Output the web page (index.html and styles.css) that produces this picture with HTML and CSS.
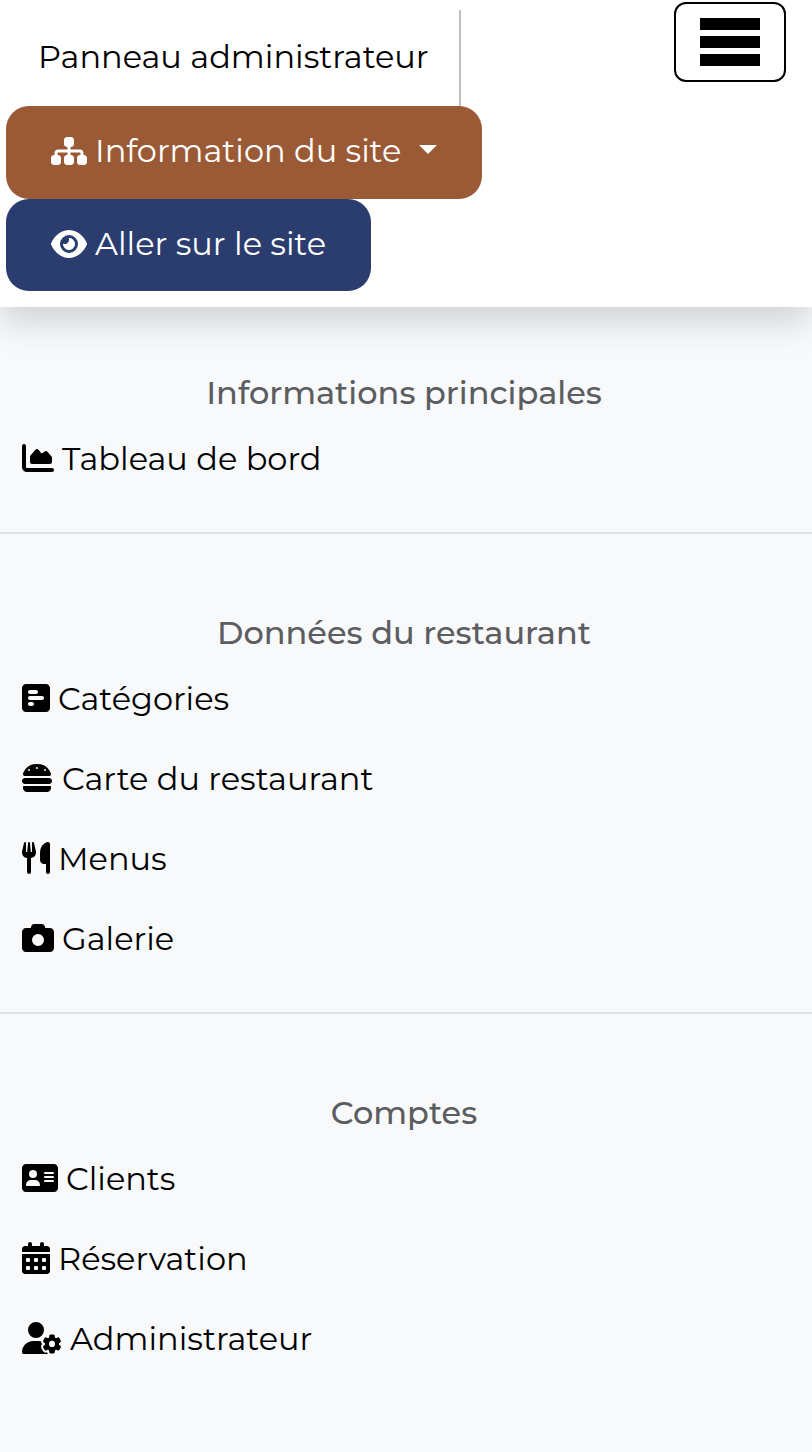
FILE: index.html
```html
<!DOCTYPE html>
<html lang="fr">
<head>
<meta charset="utf-8">
<title>Panneau administrateur</title>
<link rel="stylesheet" href="styles.css">
</head>
<body>
<header class="topbar">
  <div class="brand-row">
    <div class="brand">Panneau administrateur</div>
    <button class="toggler" aria-label="Menu"><span></span><span></span><span></span></button>
  </div>
  <a class="btn btn-info">
    <svg class="icon w36" viewBox="0 0 576 512"><path d="M208 80c0-26.500 21.500-48 48-48l64 0c26.500 0 48 21.500 48 48l0 64c0 26.500-21.500 48-48 48l-8 0 0 40 152 0c30.900 0 56 25.100 56 56l0 32 8 0c26.500 0 48 21.500 48 48l0 64c0 26.500-21.500 48-48 48l-64 0c-26.500 0-48-21.500-48-48l0-64c0-26.500 21.500-48 48-48l8 0 0-32c0-4.400-3.600-8-8-8l-152 0 0 40 8 0c26.500 0 48 21.500 48 48l0 64c0 26.500-21.500 48-48 48l-64 0c-26.500 0-48-21.500-48-48l0-64c0-26.500 21.500-48 48-48l8 0 0-40-152 0c-4.400 0-8 3.600-8 8l0 32 8 0c26.500 0 48 21.500 48 48l0 64c0 26.500-21.500 48-48 48l-64 0c-26.500 0-48-21.500-48-48l0-64c0-26.500 21.500-48 48-48l8 0 0-32c0-30.900 25.100-56 56-56l152 0 0-40-8 0c-26.500 0-48-21.500-48-48l0-64z"/></svg>
    <span>Information du site</span><i class="caret"></i>
  </a>
  <a class="btn btn-site">
    <svg class="icon w36" viewBox="0 0 576 512"><path d="M288 32c-80.800 0-145.500 36.800-192.600 80.600C48.600 156 17.300 208 2.500 243.700c-3.300 7.900-3.300 16.700 0 24.600C17.300 304 48.600 356 95.400 399.400C142.500 443.200 207.200 480 288 480s145.500-36.800 192.600-80.600c46.800-43.500 78.100-95.400 93-131.100c3.300-7.900 3.300-16.700 0-24.600c-14.900-35.700-46.200-87.700-93-131.100C433.500 68.800 368.800 32 288 32zM144 256a144 144 0 1 1 288 0 144 144 0 1 1 -288 0zm144-64c0 35.300-28.700 64-64 64c-7.100 0-13.900-1.200-20.300-3.300c-5.500-1.800-11.900 1.600-11.700 7.400c.3 6.900 1.300 13.800 3.200 20.700c13.700 51.200 66.400 81.600 117.600 67.900s81.600-66.400 67.900-117.600c-11.100-41.500-47.800-69.400-88.600-71.100c-5.800-.2-9.200 6.100-7.400 11.700c2.100 6.400 3.300 13.200 3.300 20.300z"/></svg>
    <span>Aller sur le site</span>
  </a>
</header>
<nav>
  <section class="group">
    <h2 class="title">Informations principales</h2>
    <a class="item"><svg class="icon w32" viewBox="0 0 512 512"><path d="M64 64c0-17.700-14.300-32-32-32S0 46.300 0 64V400c0 44.200 35.800 80 80 80H480c17.700 0 32-14.300 32-32s-14.300-32-32-32H80c-8.800 0-16-7.200-16-16V64zm96 288H448c17.700 0 32-14.300 32-32V251.800c0-7.600-2.700-15-7.700-20.800l-65.800-76.800c-12.100-14.200-33.700-15-46.900-1.800l-21 21c-10 10-26.400 9.200-35.400-1.600l-39.200-47c-12.600-15.100-35.700-15.400-48.700-.6L135.900 215c-5.100 5.800-7.900 13.300-7.900 21.100v84c0 17.700 14.300 32 32 32z"/></svg><span>Tableau de bord</span></a>
  </section>
  <section class="group">
    <h2 class="title">Données du restaurant</h2>
    <a class="item"><svg class="icon w28" viewBox="0 0 448 512"><path d="M448 96c0-35.300-28.700-64-64-64L64 32C28.700 32 0 60.700 0 96L0 416c0 35.300 28.700 64 64 64l320 0c35.300 0 64-28.700 64-64l0-320zM256 160c0 17.700-14.300 32-32 32l-96 0c-17.700 0-32-14.300-32-32s14.300-32 32-32l96 0c17.700 0 32 14.300 32 32zm64 64c17.700 0 32 14.300 32 32s-14.300 32-32 32l-192 0c-17.700 0-32-14.300-32-32s14.300-32 32-32l192 0zM192 352c0 17.700-14.300 32-32 32l-32 0c-17.700 0-32-14.300-32-32s14.300-32 32-32l32 0c17.700 0 32 14.300 32 32z"/></svg><span>Catégories</span></a>
    <a class="item"><svg class="icon w32" viewBox="16 0 512 512"><path d="M61.100 224C45 224 32 211 32 194.900c0-1.900 .2-3.700 .6-5.600C37.900 168.300 78.800 32 256 32s218.100 136.300 223.400 157.300c.5 1.900 .6 3.700 .6 5.600c0 16.100-13 29.100-29.100 29.100H61.100zM144 128a16 16 0 1 0 -32 0 16 16 0 1 0 32 0zm240 16a16 16 0 1 0 0-32 16 16 0 1 0 0 32zM272 96a16 16 0 1 0 -32 0 16 16 0 1 0 32 0zM16 304c0-26.500 21.500-48 48-48H448c26.500 0 48 21.500 48 48s-21.500 48-48 48H64c-26.500 0-48-21.500-48-48zm16 96c0-8.800 7.200-16 16-16H464c8.800 0 16 7.200 16 16v16c0 35.300-28.700 64-64 64H96c-35.300 0-64-28.700-64-64V400z"/></svg><span>Carte du restaurant</span></a>
    <a class="item"><svg class="icon w28" viewBox="0 0 448 512"><path d="M416 0C400 0 288 32 288 176V288c0 35.300 28.700 64 64 64h32V480c0 17.700 14.300 32 32 32s32-14.300 32-32V352 240 32c0-17.700-14.300-32-32-32zM64 16C64 7.800 57.900 1 49.700 .1S34.200 4.600 32.400 12.500L2.100 148.800C.7 155.100 0 161.500 0 167.900c0 45.900 35.100 83.600 80 87.700V480c0 17.700 14.300 32 32 32s32-14.300 32-32V255.600c44.900-4.100 80-41.800 80-87.700c0-6.400-.7-12.800-2.100-19.100L191.600 12.500c-1.800-8-9.300-13.300-17.400-12.400S160 7.800 160 16V150.200c0 5.400-4.400 9.800-9.800 9.800c-5.100 0-9.300-3.900-9.800-9L127.900 14.600C127.200 6.300 120.300 0 112 0s-15.200 6.300-15.900 14.600L83.700 151c-.5 5.100-4.700 9-9.800 9c-5.400 0-9.800-4.400-9.800-9.800V16z"/></svg><span>Menus</span></a>
    <a class="item"><svg class="icon w32" viewBox="0 0 512 512"><path d="M149.100 64.800L138.700 96H64C28.700 96 0 124.700 0 160V416c0 35.300 28.700 64 64 64H448c35.300 0 64-28.700 64-64V160c0-35.300-28.700-64-64-64H373.300L362.900 64.800C356.400 45.200 338.100 32 317.400 32H194.600c-20.700 0-39 13.200-45.500 32.800zM256 192a96 96 0 1 1 0 192 96 96 0 1 1 0-192z"/></svg><span>Galerie</span></a>
  </section>
  <section class="group">
    <h2 class="title">Comptes</h2>
    <a class="item"><svg class="icon w36" viewBox="0 0 576 512"><path fill-rule="evenodd" d="M64 32C28.700 32 0 60.700 0 96V416c0 35.300 28.700 64 64 64H512c35.300 0 64-28.700 64-64V96c0-35.300-28.700-64-64-64H64zm80 256h64c44.200 0 80 35.800 80 80c0 8.800-7.200 16-16 16H80c-8.800 0-16-7.200-16-16c0-44.200 35.800-80 80-80zm-32-96a64 64 0 1 1 128 0 64 64 0 1 1 -128 0zm256-32H496a16 16 0 0 1 0 32H368a16 16 0 0 1 0-32zm0 64H496a16 16 0 0 1 0 32H368a16 16 0 0 1 0-32zm0 64H496a16 16 0 0 1 0 32H368a16 16 0 0 1 0-32z"/></svg><span>Clients</span></a>
    <a class="item"><svg class="icon w28" viewBox="0 0 448 512"><path fill-rule="evenodd" d="M128 0c17.700 0 32 14.300 32 32V64H288V32c0-17.700 14.300-32 32-32s32 14.300 32 32V64h48c26.500 0 48 21.500 48 48v48H0V112C0 85.500 21.500 64 48 64H96V32c0-17.700 14.300-32 32-32zM0 192H448V464c0 26.500-21.500 48-48 48H48c-26.500 0-48-21.500-48-48zM80 256a16 16 0 0 0-16 16v32a16 16 0 0 0 16 16h32a16 16 0 0 0 16-16v-32a16 16 0 0 0-16-16zM208 256a16 16 0 0 0-16 16v32a16 16 0 0 0 16 16h32a16 16 0 0 0 16-16v-32a16 16 0 0 0-16-16zM336 256a16 16 0 0 0-16 16v32a16 16 0 0 0 16 16h32a16 16 0 0 0 16-16v-32a16 16 0 0 0-16-16zM80 384a16 16 0 0 0-16 16v32a16 16 0 0 0 16 16h32a16 16 0 0 0 16-16v-32a16 16 0 0 0-16-16zM208 384a16 16 0 0 0-16 16v32a16 16 0 0 0 16 16h32a16 16 0 0 0 16-16v-32a16 16 0 0 0-16-16zM336 384a16 16 0 0 0-16 16v32a16 16 0 0 0 16 16h32a16 16 0 0 0 16-16v-32a16 16 0 0 0-16-16z"/></svg><span>Réservation</span></a>
    <a class="item"><svg class="icon w40" viewBox="0 0 640 512"><path d="M224 0a128 128 0 1 1 0 256A128 128 0 1 1 224 0zM178.300 304h91.400c11.800 0 23.400 1.200 34.500 3.300c-2.100 18.500 7.400 35.600 21.800 44.800c-16.600 10.600-26.700 31.600-20 53.300c4 12.900 9.400 25.500 16.400 37.600s15.200 23.100 24.400 33c15.700 16.900 39.600 18.400 57.200 8.700v.9c0 9.200 2.700 18.500 7.900 26.300H29.700C13.300 512 0 498.700 0 482.300C0 383.800 79.800 304 178.300 304zM436 218.200c0-7 4.500-13.300 11.300-14.800c10.500-2.400 21.500-3.700 32.700-3.700s22.200 1.300 32.700 3.700c6.800 1.500 11.300 7.800 11.300 14.800v17.700c0 7.800 4.800 14.800 11.600 18.700c6.800 3.900 15.100 4.500 21.800 .6l13.800-7.900c6.100-3.500 13.700-2.700 18.500 2.400c7.600 8.100 14.300 17.200 20.100 27.200s10.300 20.400 13.500 31c2.100 6.700-1.100 13.700-7.200 17.200l-14.400 8.300c-6.500 3.700-10 10.900-10 18.400s3.500 14.700 10 18.400l14.400 8.300c6.100 3.500 9.200 10.500 7.200 17.200c-3.300 10.600-7.800 21-13.500 31s-12.500 19.100-20.100 27.200c-4.800 5.100-12.500 5.900-18.500 2.400l-13.800-7.900c-6.700-3.900-15.100-3.300-21.800 .6c-6.800 3.900-11.600 10.900-11.600 18.700v17.700c0 7-4.500 13.300-11.300 14.800c-10.500 2.400-21.500 3.700-32.700 3.700s-22.200-1.300-32.700-3.700c-6.800-1.500-11.300-7.800-11.300-14.800v-17.400c0-7.900-4.900-14.900-11.700-18.900c-6.800-3.900-15.200-4.500-22-.6l-13.500 7.800c-6.100 3.500-13.700 2.700-18.500-2.400c-7.600-8.100-14.300-17.200-20.100-27.200s-10.300-20.400-13.500-31c-2.100-6.700 1.100-13.700 7.200-17.200l14-8.100c6.500-3.800 10.100-11.100 10.100-18.600s-3.500-14.800-10.100-18.600l-14-8.100c-6.100-3.500-9.200-10.500-7.200-17.200c3.300-10.600 7.700-21 13.500-31s12.500-19.100 20.100-27.200c4.800-5.100 12.400-5.900 18.500-2.400l13.600 7.800c6.800 3.900 15.200 3.300 22-.6c6.900-3.900 11.700-11 11.700-18.900V218.200zm92.100 133.500a48.100 48.100 0 1 0 -96.100 0 48.100 48.100 0 1 0 96.100 0z"/></svg><span>Administrateur</span></a>
  </section>
</nav>
</body>
</html>
```
FILE: styles.css
```css
* { box-sizing: border-box; }
body {
  margin: 0;
  min-height: 1452px;
  background: #f8f9fb;
  color: #000;
  font: 400 32px/48px Montserrat, Inter, sans-serif;
}
.topbar {
  position: relative;
  height: 307px;
  padding: 2px 26px 0 6px;
  display: flex;
  flex-direction: column;
  align-items: flex-start;
  background: #fff;
  box-shadow: 0 16px 32px rgba(0, 0, 0, .15);
}
.brand-row {
  width: 100%;
  height: 104px;
  display: flex;
  justify-content: space-between;
  align-items: flex-start;
}
.brand {
  width: 455px;
  height: 96px;
  margin-top: 8px;
  padding: 23px 0 0 32px;
  border-right: 2px solid #bfbfbf;
  white-space: nowrap;
}
.toggler {
  width: 112px;
  height: 80px;
  padding: 0;
  display: flex;
  flex-direction: column;
  align-items: center;
  justify-content: center;
  gap: 6px;
  border: 2px solid #000;
  border-radius: 12px;
  background: #fff;
}
.toggler span { width: 60px; height: 12px; background: #000; }
.btn {
  height: 92.5px;
  padding: 0 45px 2px;
  display: flex;
  align-items: center;
  gap: 8px;
  border-radius: 23px;
  color: #fff;
  white-space: nowrap;
}
.btn-info { width: 476px; background: #9b5a36; }
.btn-site { width: 365px; background: #2a3d6e; }
.caret {
  margin: -4px 0 0 auto;
  border: 9px solid transparent;
  border-top-color: #fff;
  border-bottom: 0;
}
.icon { height: 32px; flex: none; fill: currentColor; }
.item .icon { margin-bottom: 2px; }
.w28 { width: 28px; }
.w32 { width: 32px; }
.w36 { width: 36px; }
.w40 { width: 40px; }
.group { padding: 73px 0 33px; border-bottom: 2px solid #dee2e6; }
.group:first-child { padding-top: 60px; }
.group:last-child { border-bottom: 0; }
.title {
  margin: 0;
  padding-right: 4px;
  font-size: inherit;
  font-weight: 500;
  line-height: 52px;
  text-align: center;
  color: #5b5d60;
}
.item {
  height: 80px;
  padding-left: 22px;
  display: flex;
  align-items: center;
  gap: 8px;
  white-space: nowrap;
}
```
